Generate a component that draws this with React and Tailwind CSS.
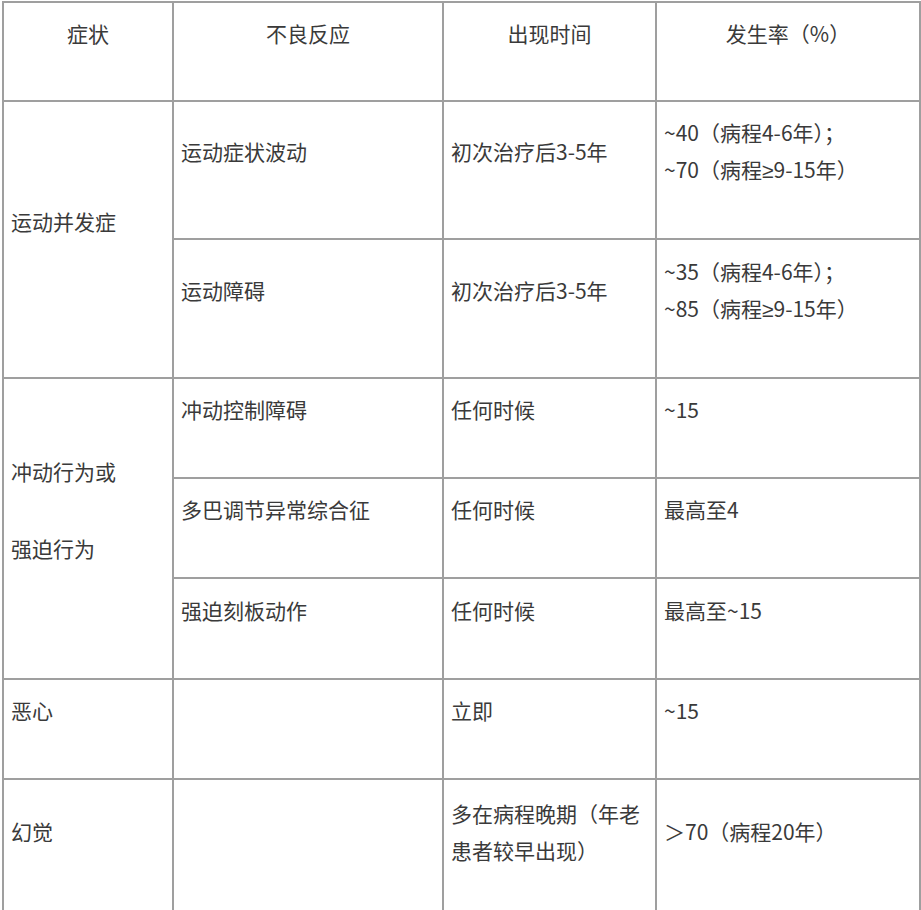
const Ge = () => <span style={{ fontFamily: '"Liberation Sans", sans-serif' }}>≥</span>;

const rows = [
  { sub: "运动症状波动", time: "初次治疗后3-5年", rate: ["~40（病程4-6年）；", <>~70（病程<Ge />9-15年）</>] },
  { sub: "运动障碍", time: "初次治疗后3-5年", rate: ["~35（病程4-6年）；", <>~85（病程<Ge />9-15年）</>] },
];

function Cell({ children, className = "" }) {
  return (
    <div className={`bg-white px-[7px] pb-[37px] flex flex-col justify-center ${className}`}>
      {children}
    </div>
  );
}

export default function App() {
  return (
    <div
      className="w-[921px] h-[910px] overflow-hidden bg-white text-[21px] leading-[37px] text-[#3a3a3a]"
      style={{ fontFamily: '"Noto Sans CJK SC", "Noto Sans", sans-serif' }}
    >
      <div className="ml-[2px] mt-[1px] w-[919px] p-[2px] bg-[#9f9f9f] grid grid-cols-[168px_268px_211px_262px] grid-rows-[97px_136px_137px_98px_98px_99px_98px_140px] gap-[2px]">
        {/* Header */}
        <Cell className="items-center">症状</Cell>
        <Cell className="items-center">不良反应</Cell>
        <Cell className="items-center">出现时间</Cell>
        <Cell className="items-center">发生率（%）</Cell>

        {/* 运动并发症 */}
        <Cell className="row-span-2">运动并发症</Cell>
        {rows.map((r, i) => (
          <div key={i} className="contents">
            <Cell className={i === 1 ? "col-start-2" : ""}>{r.sub}</Cell>
            <Cell>{r.time}</Cell>
            <Cell>
              {r.rate.map((t, j) => (
                <div key={j}>{t}</div>
              ))}
            </Cell>
          </div>
        ))}

        {/* 冲动行为或强迫行为 */}
        <Cell className="row-span-3">
          <div>冲动行为或</div>
          <div className="h-[40px]" />
          <div>强迫行为</div>
        </Cell>
        <Cell>冲动控制障碍</Cell>
        <Cell>任何时候</Cell>
        <Cell>~15</Cell>

        <Cell className="col-start-2">多巴调节异常综合征</Cell>
        <Cell>任何时候</Cell>
        <Cell>最高至4</Cell>

        <Cell className="col-start-2">强迫刻板动作</Cell>
        <Cell>任何时候</Cell>
        <Cell>最高至~15</Cell>

        {/* 恶心 */}
        <Cell>恶心</Cell>
        <Cell />
        <Cell>立即</Cell>
        <Cell>~15</Cell>

        {/* 幻觉 */}
        <Cell>幻觉</Cell>
        <Cell />
        <Cell>
          <div>多在病程晚期（年老</div>
          <div>患者较早出现）</div>
        </Cell>
        <Cell>＞70（病程20年）</Cell>
      </div>
    </div>
  );
}
